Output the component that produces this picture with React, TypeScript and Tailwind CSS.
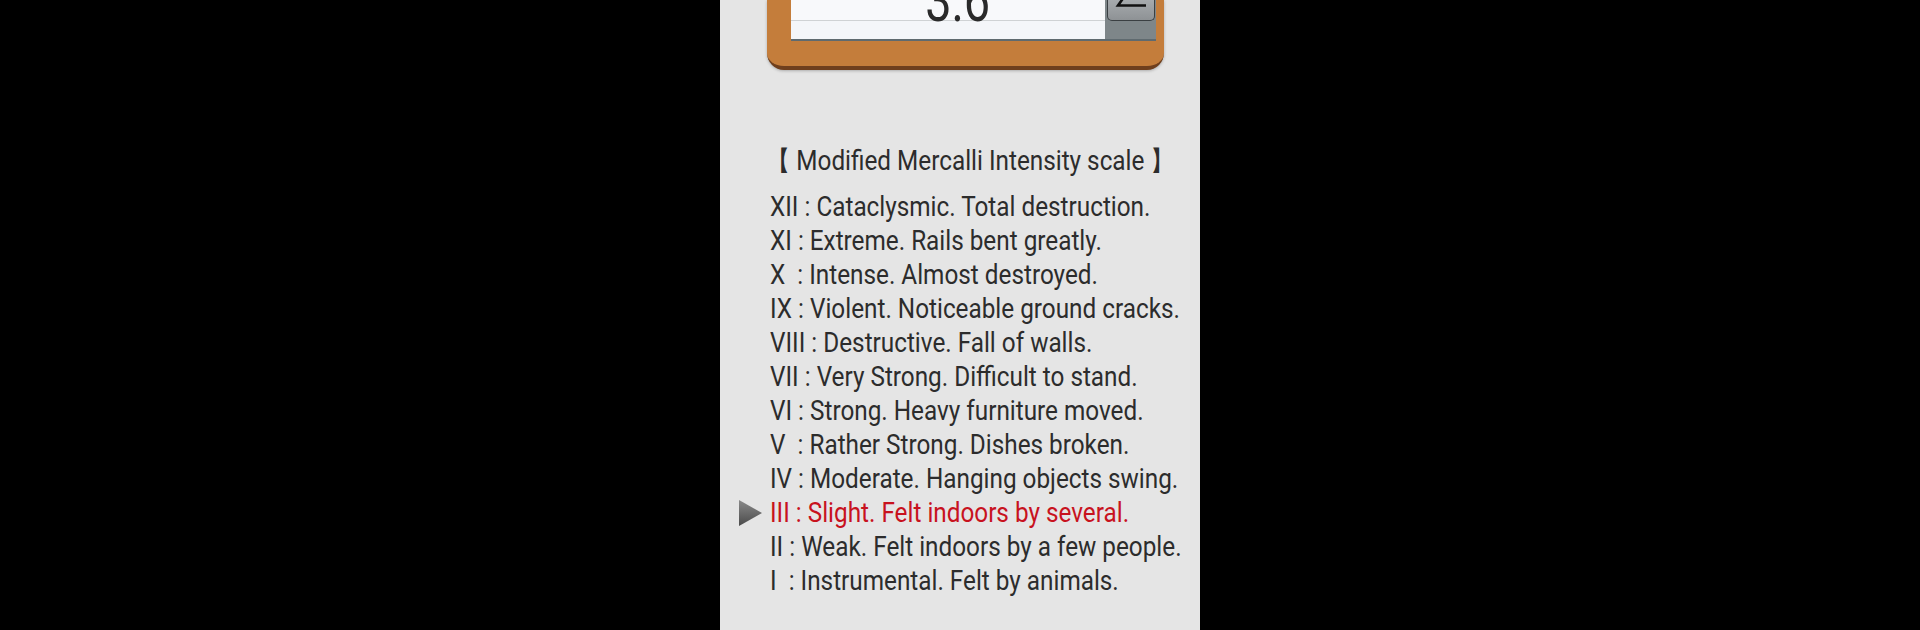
import React from 'react';

type Row = { level: string; text: string; active?: boolean };

const rows: Row[] = [
  { level: 'XII', text: ' : Cataclysmic. Total destruction.' },
  { level: 'XI', text: ' : Extreme. Rails bent greatly.' },
  { level: 'X', text: '  : Intense. Almost destroyed.' },
  { level: 'IX', text: ' : Violent. Noticeable ground cracks.' },
  { level: 'VIII', text: ' : Destructive. Fall of walls.' },
  { level: 'VII', text: ' : Very Strong. Difficult to stand.' },
  { level: 'VI', text: ' : Strong. Heavy furniture moved.' },
  { level: 'V', text: '  : Rather Strong. Dishes broken.' },
  { level: 'IV', text: ' : Moderate. Hanging objects swing.' },
  { level: 'III', text: ' : Slight. Felt indoors by several.', active: true },
  { level: 'II', text: ' : Weak. Felt indoors by a few people.' },
  { level: 'I', text: '  : Instrumental. Felt by animals.' },
];

const Marker: React.FC = () => (
  <svg width="25" height="28" viewBox="0 0 25 28">
    <defs>
      <linearGradient id="tri" x1="0" y1="0" x2="0" y2="1">
        <stop offset="0" stopColor="#8a8a8a" />
        <stop offset="1" stopColor="#4a4a4a" />
      </linearGradient>
    </defs>
    <path d="M1 1 L24 14 L1 27 Z" fill="url(#tri)" />
  </svg>
);

const Display: React.FC = () => (
  <div className="ml-[47px] w-[397px] h-[70px] bg-[#c47d3b] rounded-b-[17px] border-b-[4px] border-[#6f3f1d] shadow-[0_1px_3px_rgba(0,0,0,0.25)] flex pl-[24px] pr-[8px] pb-[25px]">
    <div className="flex-1 h-[41px] overflow-hidden border-b-2 border-[#5f6a6f] bg-[linear-gradient(to_bottom,#f8f9fb_20px,#cfd2d4_20px,#cfd2d4_21px,#f4f6f9_21px)] flex items-end justify-center pl-[20px]">
      <span
        className="block leading-none text-[60px] text-[#2a2a2a] mb-[8px] scale-x-[0.78]"
        style={{ fontFamily: 'Roboto, "Noto Sans", sans-serif' }}
      >
        3.6
      </span>
    </div>
    <div className="w-[51px] h-[41px] bg-[#7e8689] border-b-2 border-[#5f6a6f] pl-[2px] pr-[1px]">
      <div className="h-[21px] rounded-b-[5px] border border-t-0 border-[#3a3f42] bg-[linear-gradient(to_bottom,#a6aaad,#8e9295)] flex items-end justify-center pb-[13px]">
        <svg width="32" height="8" viewBox="0 0 32 8">
          <path d="M9 -2 L3 6.5 L31 6.5" fill="none" stroke="#111" strokeWidth="2.6" />
        </svg>
      </div>
    </div>
  </div>
);

export default function App() {
  return (
    <div className="w-full h-[630px] bg-black flex justify-center overflow-hidden">
      <div className="w-[480px] h-[630px] bg-[#e5e5e5] flex flex-col">
        <Display />
        <div
          className="mt-[74px] text-[27px] leading-[34px] text-[#2c2c2c]"
          style={{ fontFamily: 'Roboto, "Noto Sans", sans-serif' }}
        >
          <div className="pl-[46px] mb-[12px]">
            <span className="inline-block origin-left scale-x-[0.9] whitespace-pre">【 Modified Mercalli Intensity scale 】</span>
          </div>
          {rows.map((r) => (
            <div key={r.level} className="flex items-center pl-[18px] h-[34px]">
              <div className="w-[25px] shrink-0 mr-[7px] flex items-center">{r.active && <Marker />}</div>
              <span
                className={`inline-block shrink-0 origin-left scale-x-[0.9] whitespace-pre ${r.active ? 'text-[#c8121e]' : ''}`}
              >
                {r.level}
                {r.text}
              </span>
            </div>
          ))}
        </div>
      </div>
    </div>
  );
}
